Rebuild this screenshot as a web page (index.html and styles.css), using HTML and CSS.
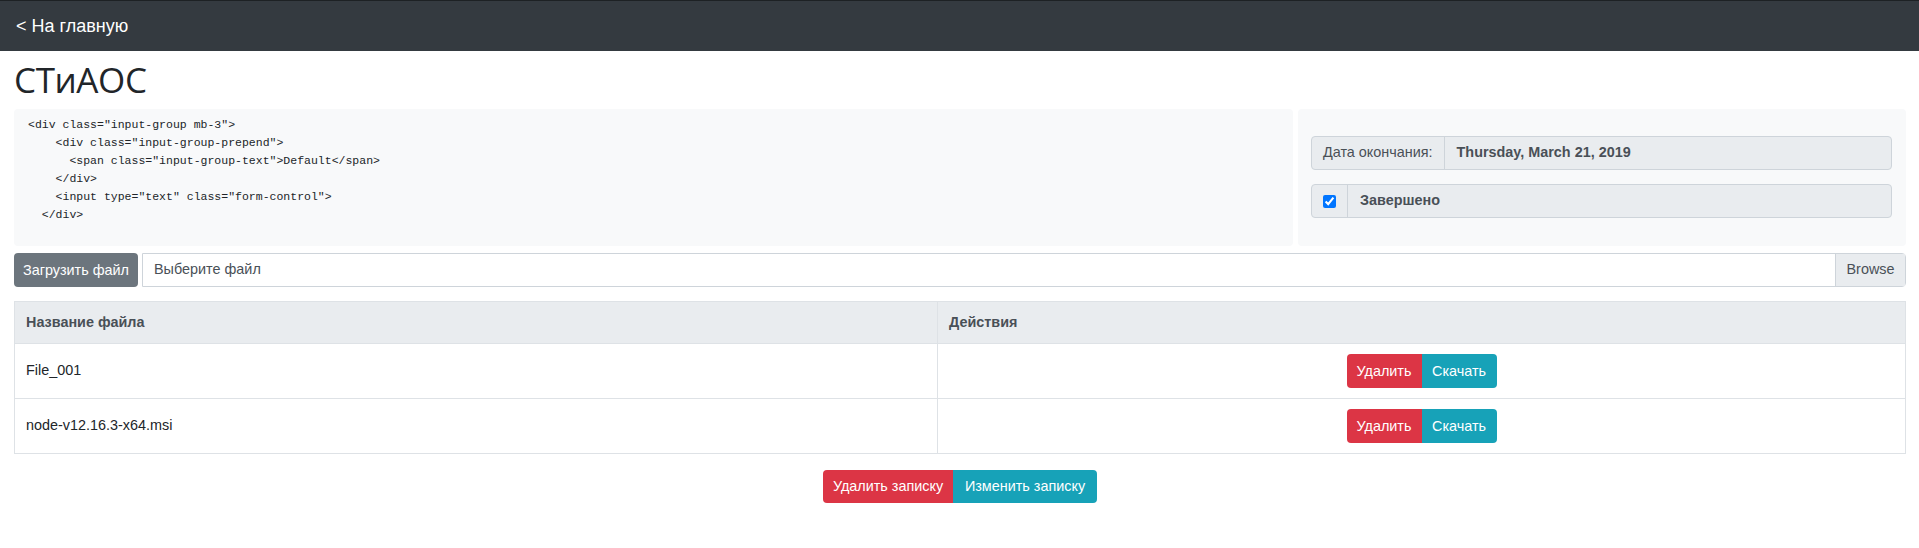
FILE: index.html
```html
<!DOCTYPE html>
<html lang="ru">
<head>
<meta charset="utf-8">
<title>СТиАОС</title>
<link rel="stylesheet" href="styles.css">
</head>
<body>
<nav class="navbar">
  <a class="brand" href="#">&lt; На главную</a>
</nav>
<main class="container">
  <h1 class="title">СТиАОС</h1>
  <div class="top-row">
    <pre class="code">&lt;div class="input-group mb-3"&gt;
    &lt;div class="input-group-prepend"&gt;
      &lt;span class="input-group-text"&gt;Default&lt;/span&gt;
    &lt;/div&gt;
    &lt;input type="text" class="form-control"&gt;
  &lt;/div&gt;</pre>
    <div class="info-panel">
      <div class="igroup">
        <span class="igroup-label">Дата окончания:</span>
        <span class="igroup-value">Thursday, March 21, 2019</span>
      </div>
      <div class="igroup">
        <span class="igroup-check"><input type="checkbox" checked></span>
        <span class="igroup-value">Завершено</span>
      </div>
    </div>
  </div>
  <div class="file-row">
    <button class="btn btn-secondary btn-upload">Загрузить файл</button>
    <div class="file-input">
      <span class="file-placeholder">Выберите файл</span>
      <span class="file-browse">Browse</span>
    </div>
  </div>
  <table class="files">
    <thead>
      <tr><th class="col-name">Название файла</th><th>Действия</th></tr>
    </thead>
    <tbody>
      <tr>
        <td>File_001</td>
        <td class="actions"><div class="btn-group"><button class="btn btn-danger btn-row">Удалить</button><button class="btn btn-info btn-row">Скачать</button></div></td>
      </tr>
      <tr>
        <td>node-v12.16.3-x64.msi</td>
        <td class="actions"><div class="btn-group"><button class="btn btn-danger btn-row">Удалить</button><button class="btn btn-info btn-row">Скачать</button></div></td>
      </tr>
    </tbody>
  </table>
  <div class="bottom-actions">
    <div class="btn-group">
      <button class="btn btn-danger btn-note-del">Удалить записку</button><button class="btn btn-info btn-note-edit">Изменить записку</button>
    </div>
  </div>
</main>
</body>
</html>
```
FILE: styles.css
```css
* { box-sizing: border-box; }
html, body { margin: 0; padding: 0; }
body {
  font-family: "Liberation Sans", Arial, sans-serif;
  font-size: 14.4px;
  line-height: 1.5;
  color: #212529;
  background: #fff;
  height: 548px;
  overflow: hidden;
}
.navbar {
  height: 51px;
  background: #343a40;
  border-top: 1px solid #1d2124;
  display: flex;
  align-items: center;
  padding-left: 16px;
}
.brand {
  color: #fff;
  text-decoration: none;
  font-size: 18px;
  line-height: 1;
}
.container {
  padding: 0 13px 0 14px;
}
.title {
  margin: 6px 0 7px;
  font-family: "Open Sans", "Liberation Sans", sans-serif;
  font-size: 35px;
  line-height: 45px;
  font-weight: 500;
  letter-spacing: -0.4px;
  color: #212529;
}
.top-row {
  display: grid;
  grid-template-columns: 1fr 608px;
  gap: 5px;
}
.code {
  margin: 0;
  background: #f8f9fa;
  border-radius: 4px;
  padding: 7px 14px;
  font-family: "Liberation Mono", "DejaVu Sans Mono", monospace;
  font-size: 11.5px;
  line-height: 18px;
  color: #212529;
}
.info-panel {
  background: #f8f9fa;
  border-radius: 4px;
  padding: 27px 14px 28px 13px;
  display: flex;
  flex-direction: column;
  gap: 14px;
}
.igroup {
  display: flex;
  height: 34px;
  border: 1px solid #ced4da;
  border-radius: 4px;
  background: #e9ecef;
  color: #495057;
}
.igroup-label {
  display: flex;
  align-items: center;
  padding: 0 11px;
  border-right: 1px solid #ced4da;
}
.igroup-check {
  display: flex;
  align-items: center;
  padding: 0 11px;
  border-right: 1px solid #ced4da;
}
.igroup-check input {
  margin: 0;
  width: 13px;
  height: 13px;
}
.igroup-value {
  display: flex;
  align-items: center;
  padding: 0 12px;
  font-weight: 700;
}
.file-row {
  display: flex;
  gap: 4px;
  margin-top: 7px;
  height: 34px;
}
.btn {
  font-family: inherit;
  font-size: 14.4px;
  line-height: 1;
  border: 0;
  color: #fff;
  cursor: pointer;
  padding: 0;
  display: inline-flex;
  align-items: center;
  justify-content: center;
}
.btn-secondary { background: #6c757d; }
.btn-danger { background: #dc3545; }
.btn-info { background: #17a2b8; }
.btn-upload {
  width: 124px;
  border-radius: 4px;
}
.file-input {
  flex: 1;
  display: flex;
  border: 1px solid #ced4da;
  border-radius: 0 4px 4px 0;
  background: #fff;
  color: #495057;
}
.file-placeholder {
  flex: 1;
  display: flex;
  align-items: center;
  padding-left: 11px;
}
.file-browse {
  width: 70px;
  display: flex;
  align-items: center;
  justify-content: center;
  background: #e9ecef;
  border-left: 1px solid #ced4da;
}
.files {
  width: 100%;
  margin-top: 14px;
  border-collapse: collapse;
  border: 1px solid #dee2e6;
}
.files th, .files td {
  border: 1px solid #dee2e6;
  text-align: left;
  padding: 0 11px;
}
.files th {
  height: 42px;
  background: #e9ecef;
  color: #495057;
  font-weight: 700;
}
.files td {
  height: 55px;
}
.col-name { width: 923px; }
.files td.actions { text-align: center; }
.btn-group {
  display: inline-flex;
  border-radius: 4px;
  overflow: hidden;
  vertical-align: middle;
}
.btn-row {
  width: 75px;
  height: 34px;
}
.bottom-actions {
  display: flex;
  justify-content: center;
  margin-top: 16px;
}
.btn-note-del { width: 130px; height: 33px; }
.btn-note-edit { width: 144px; height: 33px; }
```
